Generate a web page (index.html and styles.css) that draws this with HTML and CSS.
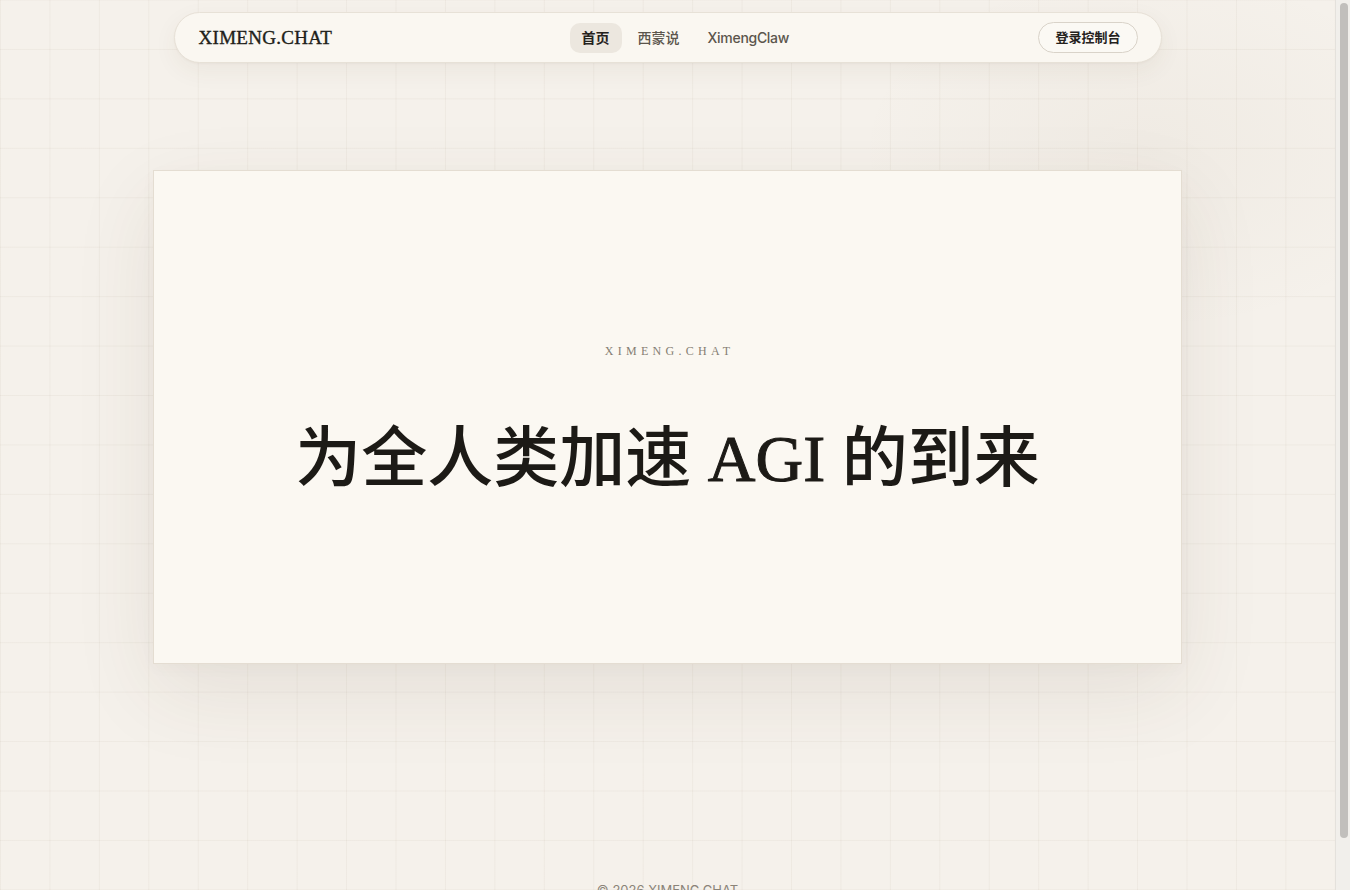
FILE: index.html
```html
<!DOCTYPE html>
<html lang="zh-CN">
<head>
<meta charset="utf-8">
<title>XIMENG.CHAT</title>
<link rel="stylesheet" href="styles.css">
</head>
<body>
<div class="page">
  <header class="header">
    <nav class="nav">
      <a class="logo" href="#">XIMENG.CHAT</a>
      <div class="links">
        <a class="link active" href="#">首页</a>
        <a class="link" href="#">西蒙说</a>
        <a class="link latin" href="#">XimengClaw</a>
      </div>
      <a class="login" href="#">登录控制台</a>
    </nav>
  </header>
  <main class="main">
    <section class="card">
      <div class="eyebrow">XIMENG.CHAT</div>
      <h1 class="title">为全人类加速 <span class="latin-serif">AGI</span> 的到来</h1>
    </section>
  </main>
  <footer class="footer">© 2026 XIMENG.CHAT</footer>
</div>
<div class="scrollbar" aria-hidden="true"><div class="thumb"></div></div>
</body>
</html>
```

FILE: styles.css
```css
* {
  box-sizing: border-box;
}
body {
  margin: 0;
  padding-right: 15px;
  background-color: #f5f1eb;
  font-family: Inter, "Noto Sans CJK SC", sans-serif;
  color: #24211c;
}
.scrollbar {
  position: fixed;
  top: 0;
  right: 0;
  width: 15px;
  height: 100vh;
  background: #f1efeb;
  border-left: 1px solid #e4e1dc;
  padding: 3px 3px 52px 3px;
}
.thumb {
  width: 8px;
  height: 100%;
  margin-left: 1px;
  border-radius: 4px;
  background: #c1bfbc;
}
.page {
  min-height: 100vh;
  background-image:
    radial-gradient(ellipse 420px 260px at 1150px 150px, rgba(120, 95, 60, 0.045), rgba(120, 95, 60, 0) 70%),
    linear-gradient(rgba(120, 100, 70, 0.055) 1px, transparent 1px),
    linear-gradient(90deg, rgba(120, 100, 70, 0.055) 1px, transparent 1px);
  background-size: 100% 100%, 49.45px 49.45px, 49.45px 49.45px;
  background-position: 0 0, 0 -0.5px, 0 0;
  padding-bottom: 40px;
}
a {
  text-decoration: none;
  color: inherit;
}
.header {
  padding-top: 12px;
  display: flex;
  justify-content: center;
}
.nav {
  width: 988px;
  height: 51px;
  display: flex;
  align-items: center;
  justify-content: space-between;
  padding: 0 23px 0 24px;
  background: #faf7f1;
  border: 1px solid #e7e1d7;
  border-radius: 999px;
  box-shadow: 0 8px 24px rgba(90, 70, 40, 0.06), 0 1px 2px rgba(90, 70, 40, 0.04);
}
.logo {
  font-family: "Liberation Serif", serif;
  font-size: 19px;
  letter-spacing: 0.3px;
  color: #211e19;
  -webkit-text-stroke: 0.35px #211e19;
}
.links {
  display: flex;
  gap: 4px;
  align-items: center;
}
.link {
  font-family: Inter, "Noto Sans CJK SC", sans-serif;
  font-size: 14px;
  font-weight: 500;
  color: #5b554c;
  padding: 0 12px;
  height: 30px;
  line-height: 30px;
  border-radius: 10px;
}
.link.latin {
  letter-spacing: -0.3px;
}
.link.active {
  background: #ece7df;
  color: #25221d;
  font-weight: 600;
}
.login {
  font-family: Inter, "Noto Sans CJK SC", sans-serif;
  font-size: 13px;
  font-weight: 600;
  color: #25221d;
  height: 31px;
  line-height: 29px;
  padding: 0 16px;
  border: 1px solid #d9d3c9;
  border-radius: 999px;
  background: #fbf9f4;
}
.main {
  display: flex;
  justify-content: center;
  padding-top: 107px;
  padding-bottom: 218px;
}
.card {
  width: 1029px;
  height: 494px;
  background: #fbf8f2;
  border: 1px solid #e4ddd2;
  box-shadow: 0 28px 80px rgba(80, 60, 30, 0.09), 0 4px 14px rgba(80, 60, 30, 0.03);
  display: flex;
  flex-direction: column;
  align-items: center;
  justify-content: center;
  gap: 64px;
  padding-top: 6px;
}
.eyebrow {
  font-family: "Liberation Serif", serif;
  font-size: 12px;
  letter-spacing: 4.3px;
  padding-left: 4px;
  color: #857e73;
}
.title {
  margin: 0;
  font-family: "Liberation Serif", "Noto Sans CJK SC", serif;
  font-size: 66px;
  font-weight: 500;
  line-height: 1.1;
  color: #1c1a16;
  letter-spacing: 0;
}
.latin-serif {
  font-family: "Liberation Serif", serif;
  -webkit-text-stroke: 1px #1c1a16;
}
.footer {
  text-align: center;
  font-size: 13px;
  color: #8a8378;
  font-family: Inter, "Noto Sans CJK SC", sans-serif;
}
```
